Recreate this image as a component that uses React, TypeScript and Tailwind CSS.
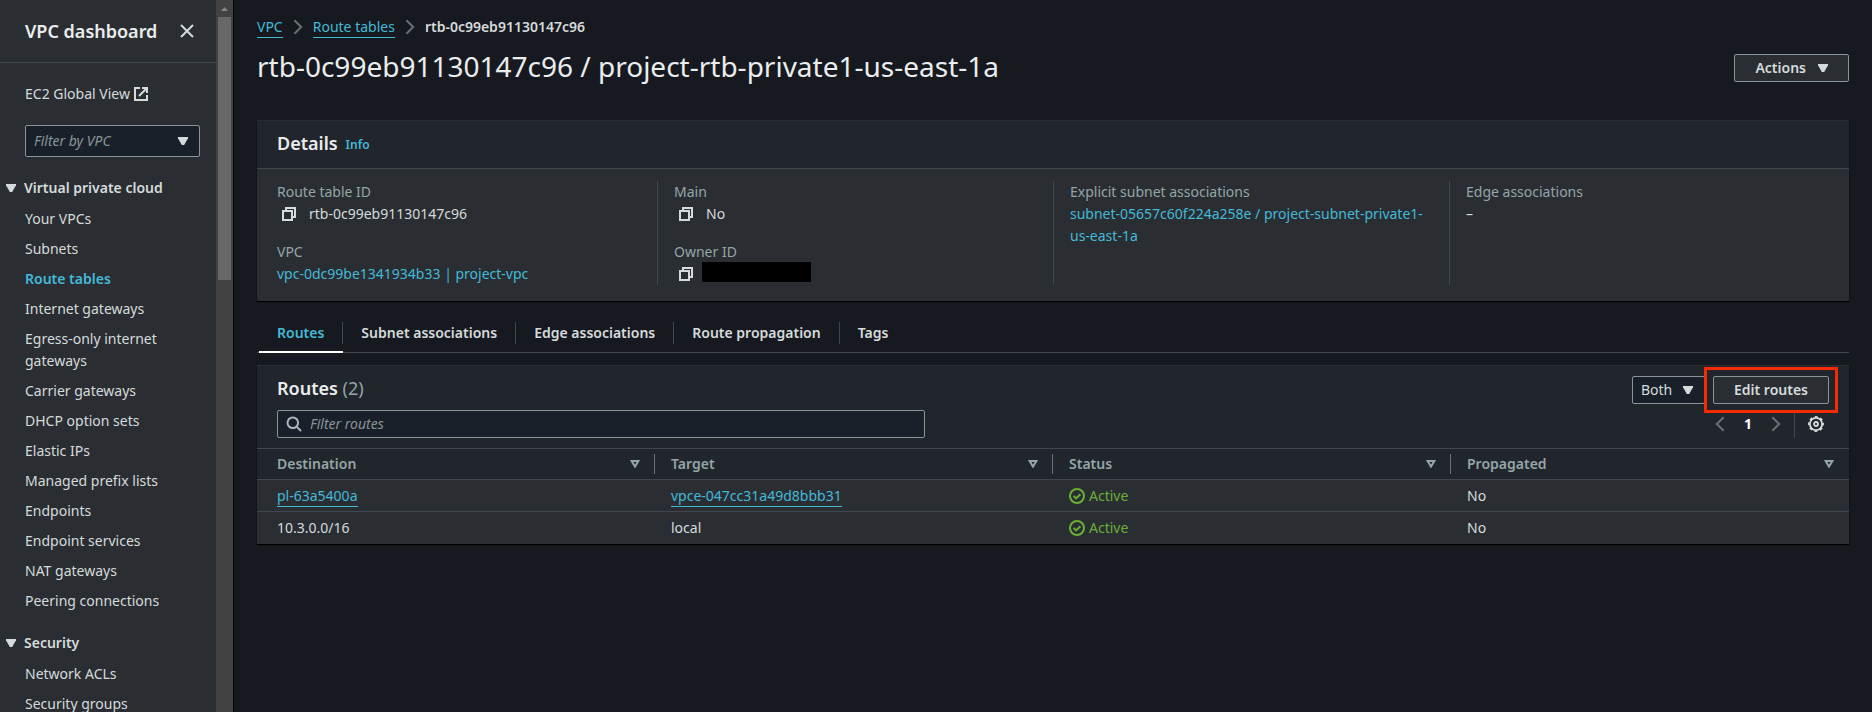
import type { ReactNode } from "react";

const vpcLinks = [
  "Your VPCs",
  "Subnets",
  "Route tables",
  "Internet gateways",
  "Egress-only internet gateways",
  "Carrier gateways",
  "DHCP option sets",
  "Elastic IPs",
  "Managed prefix lists",
  "Endpoints",
  "Endpoint services",
  "NAT gateways",
  "Peering connections",
];

const securityLinks = ["Network ACLs", "Security groups"];

const tabs = ["Routes", "Subnet associations", "Edge associations", "Route propagation", "Tags"];

const columns = ["Destination", "Target", "Status", "Propagated"];

const routes = [
  { destination: "pl-63a5400a", target: "vpce-047cc31a49d8bbb31", linked: true, propagated: "No" },
  { destination: "10.3.0.0/16", target: "local", linked: false, propagated: "No" },
];

function Caret({ className = "" }: { className?: string }) {
  return (
    <svg aria-hidden="true" viewBox="0 0 10 8" className={`h-2 w-2.5 shrink-0 fill-current ${className}`}>
      <path d="M0 0h10v1.2L6.2 8H3.8L0 1.2z" />
    </svg>
  );
}

function SortIcon() {
  return (
    <svg aria-hidden="true" viewBox="0 0 10 8" className="h-2 w-2.5" fill="none" stroke="currentColor" strokeWidth="2">
      <path d="M1.6 1h6.8L5 6.6z" />
    </svg>
  );
}

function Chevron({ left = false }: { left?: boolean }) {
  return (
    <svg aria-hidden="true" viewBox="0 0 10 16" className="h-4 w-2.5 shrink-0" fill="none" stroke="currentColor" strokeWidth="2">
      <path d={left ? "M8.6 1.2L1.8 8l6.8 6.8" : "M1.4 1.2L8.2 8l-6.8 6.8"} />
    </svg>
  );
}

function CopyButton({ label }: { label: string }) {
  return (
    <button type="button" aria-label={`Copy ${label}`} className="px-1 text-[#d5dbdb]">
      <svg aria-hidden="true" viewBox="0 0 16 16" className="size-4" fill="none" stroke="currentColor" strokeWidth="2">
        <path d="M2 5h9v9H2z" />
        <path d="M5 5V2h9v9h-3" />
      </svg>
    </button>
  );
}

function Field({ label, children }: { label: string; children: ReactNode }) {
  return (
    <div>
      <dt className="text-[#95a5a6]">{label}</dt>
      <dd>{children}</dd>
    </div>
  );
}

function NavSection({ title, links }: { title: string; links: string[] }) {
  return (
    <section>
      <button type="button" className="flex items-center gap-2 pl-1.5 font-semibold">
        <Caret />
        {title}
      </button>
      <ul className="mt-[9px] flex flex-col gap-2 pr-6 pl-[25px]">
        {links.map((link) => (
          <li key={link}>
            <a
              href="#"
              aria-current={link === "Route tables" ? "page" : undefined}
              className={link === "Route tables" ? "block font-semibold text-[#44b9d6]" : "block"}
            >
              {link}
            </a>
          </li>
        ))}
      </ul>
    </section>
  );
}

function Sidebar() {
  return (
    <aside className="flex h-screen w-[233px] shrink-0 bg-[#2a2e33]">
      <nav aria-label="VPC" className="min-w-0 flex-1 overflow-hidden">
        <header className="flex h-[63px] items-center justify-between border-b border-[#414750] pr-[19px] pl-[25px]">
          <h2 className="text-lg font-semibold text-[#eaeded]">VPC dashboard</h2>
          <button type="button" aria-label="Close navigation" className="p-0.5">
            <svg aria-hidden="true" viewBox="0 0 16 16" className="size-4" fill="none" stroke="currentColor" strokeWidth="2">
              <path d="M2 2l12 12M14 2L2 14" />
            </svg>
          </button>
        </header>
        <div className="pt-5 pr-4 pl-[25px]">
          <a href="#" className="flex items-center gap-1">
            EC2 Global View
            <svg aria-hidden="true" viewBox="0 0 14 14" className="size-3.5" fill="none" stroke="currentColor" strokeWidth="2">
              <path d="M6 1H1v12h12V8" />
              <path d="M8 1h5v5M13 1L5 9" />
            </svg>
          </a>
          <div className="relative mt-5">
            <select
              aria-label="Filter by VPC"
              className="block h-8 w-full appearance-none rounded-xs border border-[#879596] bg-[#1a2029] px-2 text-[#879596] italic"
            >
              <option>Filter by VPC</option>
            </select>
            <Caret className="pointer-events-none absolute top-3 right-3" />
          </div>
        </div>
        <div className="mt-5 flex flex-col gap-5">
          <NavSection title="Virtual private cloud" links={vpcLinks} />
          <NavSection title="Security" links={securityLinks} />
        </div>
      </nav>
      <div aria-hidden="true" className="flex w-[17px] flex-col items-center bg-[#424242]">
        <svg viewBox="0 0 17 17" className="size-[17px] shrink-0 fill-[#868686]">
          <path d="M5 11l3.5-4 3.5 4z" />
        </svg>
        <div className="h-[37%] w-[13px] bg-[#686868]" />
      </div>
    </aside>
  );
}

function Details() {
  const divided = "-ml-4 border-l border-[#414750] pl-4";
  return (
    <section className="border-t border-[#2a2e33] bg-[#2a2e33] shadow-[0_1px_1px_#000]">
      <header className="flex h-12 items-center gap-2 border-b border-[#414750] bg-[#21252c] px-5 pb-1">
        <h2 className="text-lg font-semibold text-[#eaeded]">Details</h2>
        <a href="#" className="pt-1 text-xs font-semibold text-[#44b9d6]">
          Info
        </a>
      </header>
      <dl className="grid grid-cols-4 gap-8 px-5 pt-3 pb-4">
        <div className="flex flex-col gap-4">
          <Field label="Route table ID">
            <span className="flex items-center gap-2">
              <CopyButton label="route table ID" />
              rtb-0c99eb91130147c96
            </span>
          </Field>
          <Field label="VPC">
            <a href="#" className="text-[#44b9d6]">
              vpc-0dc99be1341934b33 | project-vpc
            </a>
          </Field>
        </div>
        <div className={`flex flex-col gap-4 ${divided}`}>
          <Field label="Main">
            <span className="flex items-center gap-2">
              <CopyButton label="main" />
              No
            </span>
          </Field>
          <Field label="Owner ID">
            <span className="flex h-[22px] items-center gap-1">
              <CopyButton label="owner ID" />
              <span className="mb-1 h-5 w-[109px] bg-black" />
            </span>
          </Field>
        </div>
        <div className={divided}>
          <Field label="Explicit subnet associations">
            <a href="#" className="text-[#44b9d6]">
              subnet-05657c60f224a258e / project-subnet-private1-us-east-1a
            </a>
          </Field>
        </div>
        <div className={divided}>
          <Field label="Edge associations">–</Field>
        </div>
      </dl>
    </section>
  );
}

function Tabs() {
  return (
    <div role="tablist" className="mt-3.5 flex border-b border-[#414750] pl-0.5">
      {tabs.map((tab, index) => (
        <button
          key={tab}
          type="button"
          role="tab"
          aria-selected={index === 0}
          className={
            index === 0
              ? "-mb-px border-b-2 border-white pt-[7px] pb-[7px] font-semibold text-[#44b9d6]"
              : "pt-[7px] pb-2 font-semibold"
          }
        >
          <span
            className={
              index === tabs.length - 1 ? "block px-[18px]" : "block border-r border-[#414750] px-[18px]"
            }
          >
            {tab}
          </span>
        </button>
      ))}
    </div>
  );
}

function StatusActive() {
  return (
    <span className="flex items-center gap-1 text-[#6aaf35]">
      <svg aria-hidden="true" viewBox="0 0 16 16" className="size-4" fill="none" stroke="currentColor" strokeWidth="2">
        <circle cx="8" cy="8" r="7" />
        <path d="M4.6 8l2.5 2.4 4.3-4.2" />
      </svg>
      Active
    </span>
  );
}

function RoutesPanel() {
  return (
    <section className="mt-3 border-t border-[#2a2e33] bg-[#21252c] shadow-[0_1px_1px_#000]">
      <div className="flex flex-col gap-1.5 px-5 py-2.5">
        <div className="flex items-center justify-between">
          <h2 className="pb-1 text-lg leading-6 font-semibold text-[#eaeded]">
            Routes <span className="font-normal text-[#95a5a6]">(2)</span>
          </h2>
          <div className="flex gap-2">
            <div className="relative">
              <select
                aria-label="Route filter"
                className="block h-7 w-[73px] appearance-none rounded-xs border border-[#879596] bg-[#1a2029] px-2"
              >
                <option>Both</option>
              </select>
              <Caret className="pointer-events-none absolute top-2.5 right-3" />
            </div>
            <div className="relative">
              <button
                type="button"
                className="block h-7 rounded-xs border border-[#879596] bg-[#2a2e33] px-5 font-semibold"
              >
                Edit routes
              </button>
              <span aria-hidden="true" className="pointer-events-none absolute -inset-[9px] border-3 border-[#f52b06]" />
            </div>
          </div>
        </div>
        <div className="flex items-center justify-between">
          <label className="flex h-7 w-[648px] items-center gap-2 rounded-xs border border-[#879596] bg-[#1a2029] px-2">
            <svg aria-hidden="true" viewBox="0 0 16 16" className="size-4 text-[#aab7b8]" fill="none" stroke="currentColor" strokeWidth="2">
              <circle cx="6.8" cy="6.8" r="5.3" />
              <path d="M10.6 10.6L15 15" />
            </svg>
            <input
              type="text"
              aria-label="Filter routes"
              placeholder="Filter routes"
              className="min-w-0 flex-1 bg-transparent outline-none placeholder:text-[#879596] placeholder:italic"
            />
          </label>
          <div className="flex h-7 items-center">
            <button type="button" aria-label="Previous page" className="flex w-7 justify-center text-[#687078]">
              <Chevron left />
            </button>
            <button type="button" aria-current="page" className="w-7 font-bold text-white">
              1
            </button>
            <button type="button" aria-label="Next page" className="flex w-7 justify-center text-[#687078]">
              <Chevron />
            </button>
            <div className="ml-1 flex h-7 items-center border-l border-[#414750] pr-[5px] pl-[13px]">
              <button type="button" aria-label="Preferences">
                <svg aria-hidden="true" viewBox="0 0 16 16" className="block size-4" fill="none" stroke="currentColor">
                  <circle cx="8" cy="8" r="6.1" strokeWidth="1.8" />
                  <circle cx="8" cy="8" r="7.2" strokeWidth="1.6" strokeDasharray="2.83 2.825" strokeDashoffset="1.4" />
                  <circle cx="8" cy="8" r="2" strokeWidth="1.8" />
                </svg>
              </button>
            </div>
          </div>
        </div>
      </div>
      <table className="w-full table-fixed border-collapse text-left">
        <thead>
          <tr className="border-y border-[#414750] text-[#95a5a6]">
            {columns.map((column, index) => (
              <th key={column} scope="col" className="h-[31px] p-0 font-semibold">
                <div
                  className={
                    index === columns.length - 1
                      ? "flex h-5 items-center justify-between pr-[15px] pl-4"
                      : index === 0
                        ? "flex h-5 items-center justify-between border-r border-[#687078] pr-3.5 pl-5"
                        : "flex h-5 items-center justify-between border-r border-[#687078] pr-3.5 pl-4"
                  }
                >
                  {column}
                  <button type="button" aria-label={`Sort by ${column}`}>
                    <SortIcon />
                  </button>
                </div>
              </th>
            ))}
          </tr>
        </thead>
        <tbody className="bg-[#2a2e33]">
          {routes.map((route) => (
            <tr key={route.destination} className="h-8 border-b border-[#414750] last:border-b-0">
              <td className="py-0 pr-4 pl-5">
                {route.linked ? (
                  <a href="#" className="inline-block border-b border-[#44b9d6] leading-5 text-[#44b9d6]">
                    {route.destination}
                  </a>
                ) : (
                  route.destination
                )}
              </td>
              <td className="px-4 py-0">
                {route.linked ? (
                  <a href="#" className="inline-block border-b border-[#44b9d6] leading-5 text-[#44b9d6]">
                    {route.target}
                  </a>
                ) : (
                  route.target
                )}
              </td>
              <td className="px-4 py-0">
                <StatusActive />
              </td>
              <td className="px-4 py-0">{route.propagated}</td>
            </tr>
          ))}
        </tbody>
      </table>
    </section>
  );
}

export default function App() {
  return (
    <div className="flex h-screen overflow-hidden bg-[#16191f] font-['Noto_Sans',sans-serif] text-sm leading-[22px] text-[#d5dbdb]">
      <Sidebar />
      <main className="min-w-0 flex-1 overflow-y-auto border-l border-black px-[23px] pt-4">
        <nav aria-label="Breadcrumb">
          <ol className="flex items-center">
            <li className="flex items-center">
              <a href="#" className="border-b border-[#44b9d6] leading-5 text-[#44b9d6]">
                VPC
              </a>
              <span className="px-2.5 text-[#687078]">
                <Chevron />
              </span>
            </li>
            <li className="flex items-center">
              <a href="#" className="border-b border-[#44b9d6] leading-5 text-[#44b9d6]">
                Route tables
              </a>
              <span className="px-2.5 text-[#687078]">
                <Chevron />
              </span>
            </li>
            <li aria-current="page" className="font-semibold">
              rtb-0c99eb91130147c96
            </li>
          </ol>
        </nav>
        <div className="mt-3 mb-[34px] flex items-center justify-between">
          <h1 className="pb-1 text-[28px] leading-8 text-[#eaeded]">
            rtb-0c99eb91130147c96 / project-rtb-private1-us-east-1a
          </h1>
          <button
            type="button"
            className="flex h-7 items-center gap-3 rounded-xs border border-[#879596] bg-[#2a2e33] px-5 font-semibold"
          >
            Actions
            <Caret />
          </button>
        </div>
        <Details />
        <Tabs />
        <RoutesPanel />
      </main>
    </div>
  );
}
